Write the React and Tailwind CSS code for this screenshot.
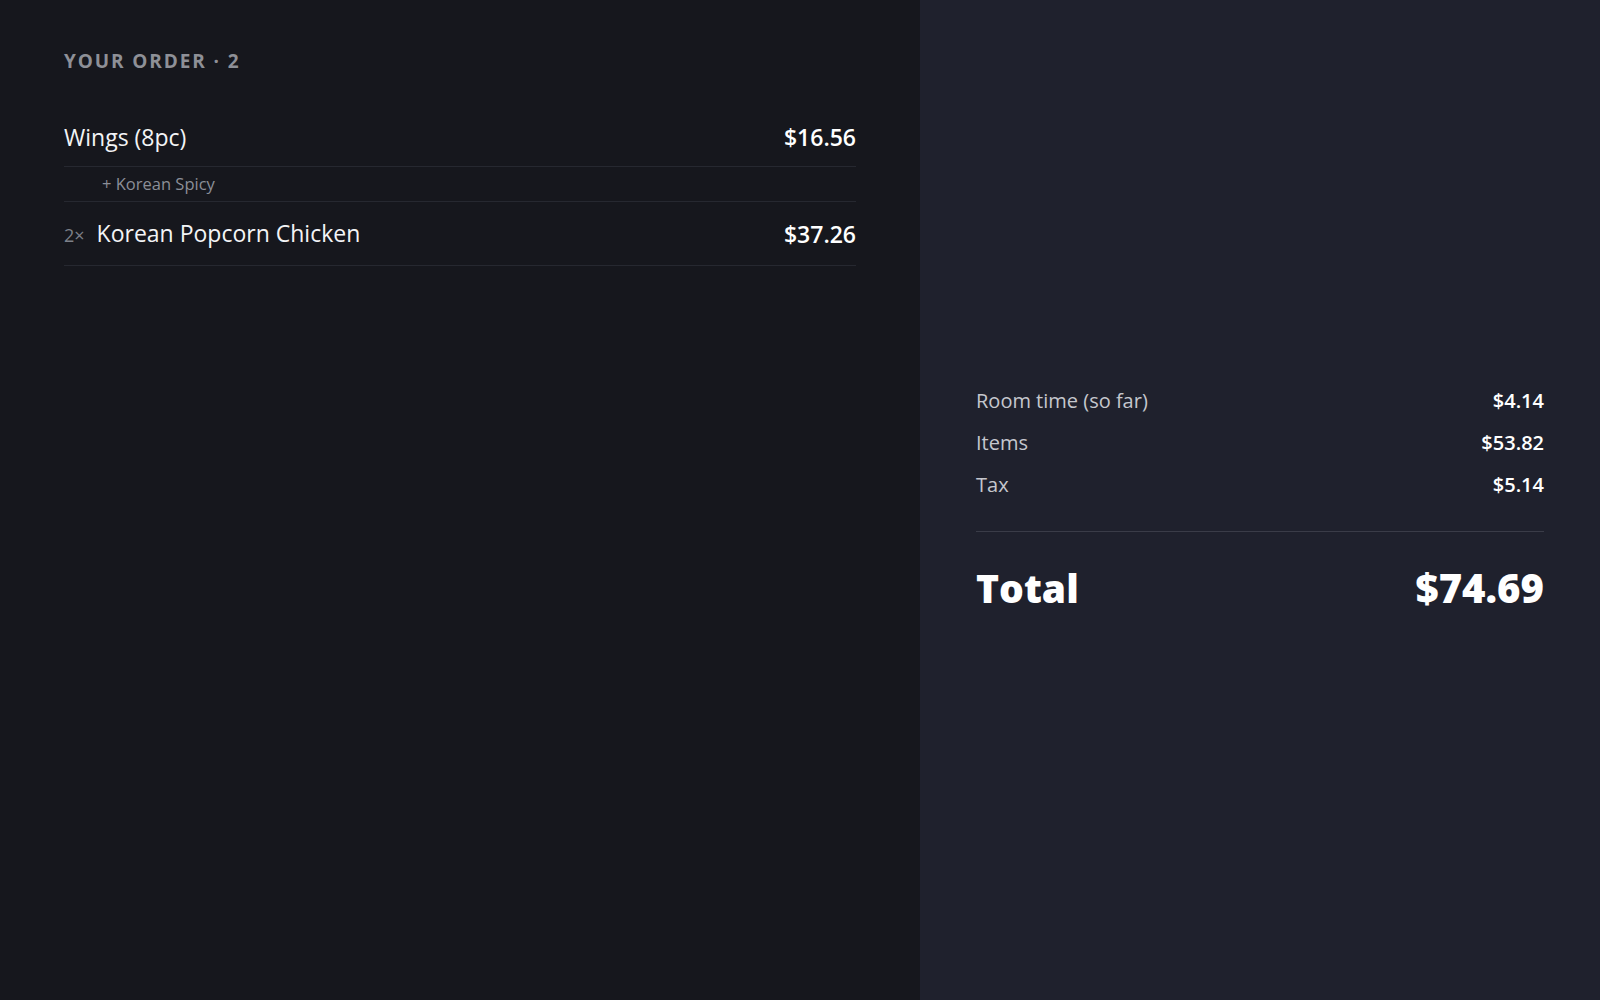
import React from 'react';

const items = [
  { qty: 1, name: 'Wings (8pc)', price: 16.56, mods: ['Korean Spicy'] },
  { qty: 2, name: 'Korean Popcorn Chicken', price: 37.26, mods: [] },
];

const summary = [
  { label: 'Room time (so far)', value: 4.14 },
  { label: 'Items', value: 53.82 },
  { label: 'Tax', value: 5.14 },
];

const money = (n) => `$${n.toFixed(2)}`;

const OrderList = () => (
  <div className="w-[920px] shrink-0 bg-[#16171d] px-16 pt-[50px]">
    <h2 className="text-[19px] font-bold uppercase tracking-[0.1em] text-[#8e9097] leading-[22px]">
      Your Order · {items.length}
    </h2>

    <ul className="mt-[34px]">
      {items.map((item) => (
        <li key={item.name}>
          <div
            className={
              item.mods.length
                ? 'flex items-center justify-between pt-4 pb-[14px] border-b border-[#262830]'
                : 'flex items-center justify-between py-4 border-b border-[#262830]'
            }
          >
            <div className="flex items-baseline">
              {item.qty > 1 && (
                <span className="mr-[12px] text-[18px] text-[#7d8089]">{item.qty}×</span>
              )}
              <span className="text-[23px] leading-[30px] text-[#f3f4f6]">{item.name}</span>
            </div>
            <span className="text-[23px] leading-[30px] font-semibold text-white">{money(item.price)}</span>
          </div>
          {item.mods.map((mod) => (
            <div
              key={mod}
              className="h-[35px] flex items-center pl-[38px] text-[16.5px] text-[#8b8e97] border-b border-[#262830]"
            >
              + {mod}
            </div>
          ))}
        </li>
      ))}
    </ul>
  </div>
);

const Totals = () => (
  <div className="flex-1 bg-[#1f212d] px-14 flex items-center">
    <div className="w-full">
      <div className="flex flex-col gap-[14px]">
        {summary.map((row) => (
          <div key={row.label} className="flex justify-between items-center leading-[28px]">
            <span className="text-[20px] text-[#c5c7cd]">{row.label}</span>
            <span className="text-[20px] font-semibold text-white">{money(row.value)}</span>
          </div>
        ))}
      </div>
      <div className="mt-[32px] border-t border-[#3a3c48]" />
      <div className="mt-[30px] flex justify-between items-center leading-[52px]">
        <span className="text-[39px] font-black text-white">Total</span>
        <span className="text-[40px] font-black text-white">$74.69</span>
      </div>
    </div>
  </div>
);

export default function App() {
  return (
    <div className="flex w-full h-[1000px] overflow-hidden" style={{ fontFamily: '"Open Sans", "Noto Sans", sans-serif' }}>
      <OrderList />
      <Totals />
    </div>
  );
}
